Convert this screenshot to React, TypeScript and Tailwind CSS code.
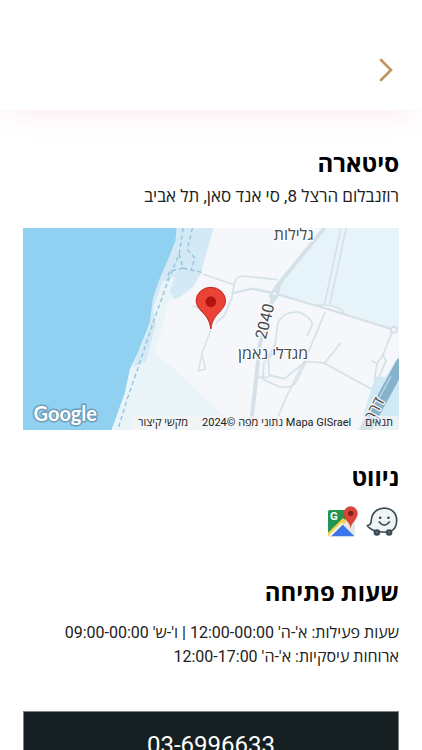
import { ReactNode } from "react";

const hours = [
  "שעות פעילות: א'-ה' 12:00-00:00 | ו'-ש' 09:00-00:00",
  "ארוחות עיסקיות: א'-ה' 12:00-17:00",
];

const SectionTitle = ({ children }: { children: ReactNode }) => (
  <h2 className="text-2xl leading-8 font-bold text-black">{children}</h2>
);

const PlaceMap = () => (
  <svg
    viewBox="0 0 1131 606"
    preserveAspectRatio="xMidYMid slice"
    className="block h-[202px] w-full"
    role="img"
    aria-label="מפה"
  >
    <rect width="1131" height="606" fill="#f5f7fa" />

    {/* open ground and parks */}
    <path d="M462 0H567L535 136L512 176L440 214L397 376L480 444L567 530L620 574L640 606H267Z" fill="#e8f4f8" />
    <path d="M462 0H573L535 136L512 176L475 206L456 214L442 190L458 145L420 160L392 240L400 290L370 400L330 420L384 284L392 209L409 159L437 94L459 39Z" fill="#d3e9f5" />
    <path d="M906 0H1131V304L1100 298L900 229L766 199L776 154Z" fill="#e6f3f8" />
    <path d="M1131 380V606H1010L1046 484L1060 446H1090Z" fill="#d0e9f5" />

    {/* sea */}
    <path d="M0 0H462L459 39L437 94L409 159L392 209L382 284L342 384L322 424L307 494L282 564L267 606H0Z" fill="#90d0f0" />

    {/* promenade */}
    <g fill="none" stroke="#94c2dc" strokeWidth="4" strokeDasharray="13 9">
      <path d="M482 0L470 78L436 160L392 284L345 424L312 520L286 606" />
      <path d="M510 0L494 64L517 90L506 126" />
      <path d="M470 78L482 120L440 130L434 158M482 120L506 126L540 134" />
    </g>

    {/* roads */}
    <g fill="none" stroke="#d5e1e8" strokeWidth="5" strokeLinejoin="round">
      <path d="M540 138L635 170" />
      <path d="M510 234L530 240M565 306L538 376L528 428L549 424L538 376" strokeWidth="4" />
      <path d="M765 155L660 144Q636 148 635 170L628 210L606 262L580 285" />
      <path d="M628 196L690 182L755 196L900 238L1111 304" strokeWidth="7" />
      <path d="M955 0L906 230M971 0L922 230" />
      <path d="M880 232Q940 226 965 254" />
      <path d="M908 252L850 390L790 510L750 606" />
      <path d="M853 324L870 290Q866 266 828 252Q780 250 766 286L758 350L738 384L740 442L786 452L850 400" />
      <path d="M758 370L724 404L722 454L770 476Q812 484 824 456L850 402H880L906 406L955 344" />
      <path d="M706 448H738M906 406L1048 484" />
      <path d="M1108 314L1080 384L1064 406L1056 452H1068L1090 400L1082 380M1046 398L1062 406" />
      <path d="M906 0L775 160L755 196L712 350L684 606" strokeWidth="12" />
    </g>
    <path d="M758 172L770 160L776 172L768 206L752 226L738 204Z" fill="#d5e1e8" />
    <circle cx="756" cy="197" r="5" fill="#f5f7fa" />
    <circle cx="1114" cy="305" r="9" fill="#f5f7fa" stroke="#d5e1e8" strokeWidth="6" />
    <path d="M1140 400L1020 620" fill="none" stroke="#86b2cb" strokeWidth="34" />
    <path d="M1105 445L1068 515" fill="none" stroke="#b8d6e5" strokeWidth="4" />

    {/* labels */}
    <g
      fill="#46494d"
      stroke="#ffffff"
      strokeWidth="7"
      strokeLinejoin="round"
      paintOrder="stroke"
      textAnchor="middle"
      fontSize="48"
    >
      <text x="814" y="36">גלילות</text>
      <text x="752" y="394">מגדלי נאמן</text>
      <text transform="translate(743 284) rotate(-76)">2040</text>
      <text transform="translate(1070 550) rotate(-62)">דרך</text>
    </g>
    <text
      x="33"
      y="580"
      fill="#ffffff"
      stroke="#6d9bb8"
      strokeWidth="9"
      strokeLinejoin="round"
      paintOrder="stroke"
      fontSize="60"
      className="font-['Lato'] font-bold"
      direction="ltr"
    >
      Google
    </text>

    {/* pin */}
    <path
      d="M565 303C561 273 549 263 536 249C527 239 521 229 521 218A44 40 0 0 1 609 218C609 229 603 239 594 249C581 263 569 273 565 303Z"
      fill="#ea4335"
      stroke="#c5221f"
      strokeWidth="3"
    />
    <circle cx="565" cy="221" r="16" fill="#b31412" />
  </svg>
);

const GoogleMapsIcon = () => (
  <svg viewBox="0 0 93 93" className="size-[31px]" aria-hidden="true">
    <rect x="3" y="12" width="81" height="79" rx="5" fill="#e4e6e8" />
    <path d="M8 12H62L60 35L4 88L3 86V17Q3 12 8 12Z" fill="#219653" />
    <path d="M43 52L82 91H8Z" fill="#3b73e8" />
    <path d="M3 80L48 36L58 46L12 91H8Q3 91 3 86Z" fill="#fbd03c" />
    <path d="M12 91L49 54L44 49L5 88Q6 91 12 91Z" fill="#eceff1" />
    <text x="9" y="41" direction="ltr" fill="#ffffff" fontSize="34" fontWeight="700">G</text>
    <path d="M71 68C69 48 50 42 50 22A21 21 0 0 1 92 22C92 42 73 48 71 68Z" fill="#dc4437" />
    <circle cx="71" cy="22" r="8" fill="#7d231c" />
  </svg>
);

const WazeIcon = () => (
  <svg viewBox="0 0 100 93" className="h-[31px] w-[33px]" aria-hidden="true">
    <path
      d="M30 76C18 72 8 66 4 59C15 58 16 51 16 42C18 20 34 6 56 6C78 6 93 22 93 43C93 62 84 73 74 77L58 79Z"
      fill="#eff4f7"
      stroke="#3d4a54"
      strokeWidth="5"
      strokeLinejoin="round"
    />
    <circle cx="43" cy="35" r="4" fill="#3d4a54" />
    <circle cx="68" cy="35" r="4" fill="#3d4a54" />
    <path d="M40 48Q55 67 71 48" fill="none" stroke="#3d4a54" strokeWidth="5" strokeLinecap="round" />
    <circle cx="33" cy="80" r="10" fill="#3d4a54" />
    <circle cx="70" cy="80" r="10" fill="#3d4a54" />
    <circle cx="33" cy="80" r="3" fill="#6b7984" />
    <circle cx="70" cy="80" r="3" fill="#6b7984" />
  </svg>
);

const App = () => {
  return (
    <div
      dir="rtl"
      className="min-h-screen bg-white font-['Roboto','Open_Sans',sans-serif] text-[#212121]"
    >
      <header className="flex h-[110px] items-end px-6 pb-6 shadow-[0_10px_30px_-6px_#fbecf0]">
        <button type="button" aria-label="חזרה" className="flex h-8 w-6 items-center justify-center">
          <svg viewBox="0 0 14 24" className="h-6 w-3.5" fill="none" aria-hidden="true">
            <path d="M2 2L12 12L2 22" stroke="#c09360" strokeWidth="2.6" strokeLinecap="round" />
          </svg>
        </button>
      </header>

      <main className="px-[23px] pt-[38px]">
        <section>
          <SectionTitle>סיטארה</SectionTitle>
          <p className="mt-0.5 text-[17px] leading-7">רוזנבלום הרצל 8, סי אנד סאן, תל אביב</p>
          <div className="relative mt-[18px]">
            <PlaceMap />
            <div className="absolute bottom-0 right-0 flex h-3.5 items-center gap-3.5 bg-[#f5f5f5]/70 px-1.5 text-[11px] whitespace-nowrap">
              <a href="#terms">תנאים</a>
              <span>Mapa GISrael נתוני מפה ©2024</span>
              <button type="button">מקשי קיצור</button>
            </div>
          </div>
        </section>

        <section className="mt-8">
          <SectionTitle>ניווט</SectionTitle>
          <div className="mt-3 flex gap-2">
            <a href="#waze" aria-label="Waze">
              <WazeIcon />
            </a>
            <a href="#google-maps" aria-label="Google Maps">
              <GoogleMapsIcon />
            </a>
          </div>
        </section>

        <section className="mt-10">
          <SectionTitle>שעות פתיחה</SectionTitle>
          <div className="mt-3 text-base leading-6">
            {hours.map((line) => (
              <p key={line}>{line}</p>
            ))}
          </div>
        </section>

        <a
          href="tel:03-6996633"
          dir="ltr"
          className="mt-[42px] flex h-[68px] items-center justify-center border border-[#7d8486] bg-[#161f21] text-2xl text-white"
        >
          03-6996633
        </a>
      </main>
    </div>
  );
};

export default App;
